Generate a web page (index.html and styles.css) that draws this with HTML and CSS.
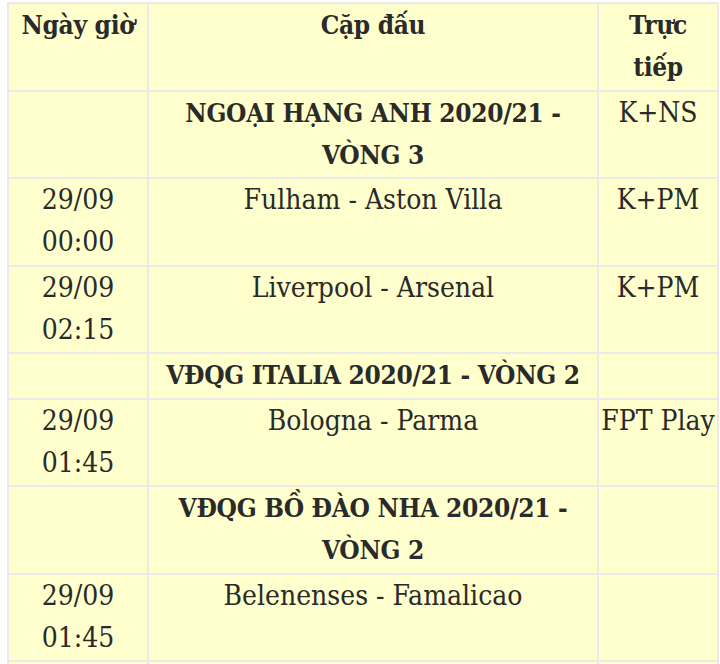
FILE: index.html
```html
<!DOCTYPE html>
<html lang="vi">
<head>
<meta charset="utf-8">
<link rel="stylesheet" href="styles.css">
</head>
<body>
<table class="schedule">
  <colgroup>
    <col class="c-time">
    <col class="c-match">
    <col class="c-tv">
  </colgroup>
  <tr class="head">
    <th>Ngày giờ</th>
    <th>Cặp đấu</th>
    <th>Trực tiếp</th>
  </tr>
  <tr>
    <td></td>
    <td class="league">NGOẠI HẠNG ANH 2020/21 - VÒNG 3</td>
    <td>K+NS</td>
  </tr>
  <tr>
    <td>29/09<br>00:00</td>
    <td>Fulham - Aston Villa</td>
    <td>K+PM</td>
  </tr>
  <tr>
    <td>29/09<br>02:15</td>
    <td>Liverpool - Arsenal</td>
    <td>K+PM</td>
  </tr>
  <tr>
    <td></td>
    <td class="league">VĐQG ITALIA 2020/21 - VÒNG 2</td>
    <td></td>
  </tr>
  <tr>
    <td>29/09<br>01:45</td>
    <td>Bologna - Parma</td>
    <td>FPT Play</td>
  </tr>
  <tr>
    <td></td>
    <td class="league">VĐQG BỒ ĐÀO NHA 2020/21 - VÒNG 2</td>
    <td></td>
  </tr>
  <tr>
    <td>29/09<br>01:45</td>
    <td>Belenenses - Famalicao</td>
    <td></td>
  </tr>
  <tr class="tail">
    <td></td>
    <td></td>
    <td></td>
  </tr>
</table>
</body>
</html>
```
FILE: styles.css
```css
html, body {
  margin: 0;
  padding: 0;
  background: #ffffff;
}
body {
  overflow: hidden;
}
.schedule {
  margin: 2px 0 0 7px;
  width: 710px;
  table-layout: fixed;
  border-collapse: collapse;
  background: #ffffcd;
  font-family: "DejaVu Serif Condensed", "DejaVu Serif", "Liberation Serif", serif;
  font-stretch: condensed;
  font-size: 28px;
  line-height: 42px;
  color: #2a2a2a;
}
.c-time { width: 140px; }
.c-match { width: 450px; }
.c-tv { width: 120px; }
.schedule th,
.schedule td {
  border: 2px solid #eaeaea;
  padding: 0 0 1.5px;
  text-align: center;
  vertical-align: top;
}
.schedule th {
  padding: 0 4px 1.5px;
}
.schedule th,
.league {
  font-weight: bold;
  font-size: 26px;
  letter-spacing: -0.3px;
}
.tail td {
  height: 42px;
}
```
